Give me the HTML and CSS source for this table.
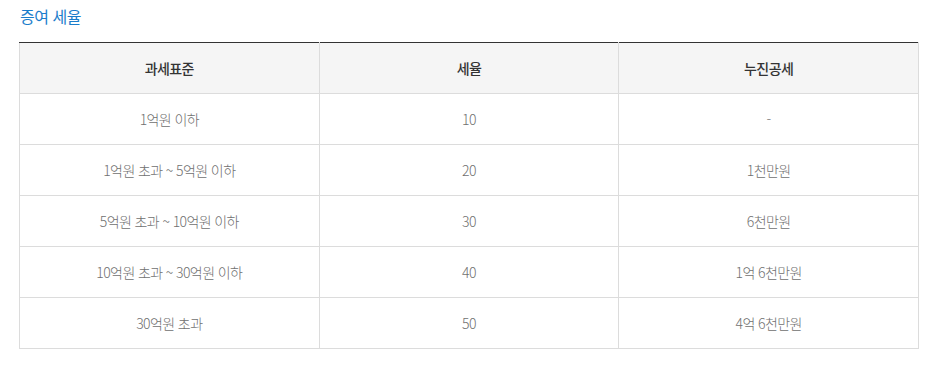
FILE: index.html
```html
<!DOCTYPE html>
<html lang="ko">
<head>
<meta charset="utf-8">
<link rel="stylesheet" href="styles.css">
</head>
<body>
<div class="wrap">
  <h3 class="title">증여 세율</h3>
  <table class="rate">
    <thead>
      <tr><th>과세표준</th><th>세율</th><th>누진공세</th></tr>
    </thead>
    <tbody>
      <tr><td>1억원 이하</td><td>10</td><td>-</td></tr>
      <tr><td>1억원 초과 ~ 5억원 이하</td><td>20</td><td>1천만원</td></tr>
      <tr><td>5억원 초과 ~ 10억원 이하</td><td>30</td><td>6천만원</td></tr>
      <tr><td>10억원 초과 ~ 30억원 이하</td><td>40</td><td>1억 6천만원</td></tr>
      <tr><td>30억원 초과</td><td>50</td><td>4억 6천만원</td></tr>
    </tbody>
  </table>
</div>
</body>
</html>
```
FILE: styles.css
```css
html, body {
  margin: 0;
  padding: 0;
  background: #fff;
}
body {
  font-family: "Noto Sans CJK KR", "Noto Sans", sans-serif;
}
.wrap {
  padding: 5px 0 0 19px;
  width: 900px;
}
.title {
  margin: 0 0 15px 1px;
  font-size: 16px;
  line-height: 22px;
  font-weight: 400;
  color: #1b7dcb;
  letter-spacing: -0.5px;
}
.rate {
  width: 900px;
  border-collapse: collapse;
  table-layout: fixed;
  border-top: 1px solid #333;
}
.rate th, .rate td {
  border: 1px solid #dcdcdc;
  text-align: center;
  height: 50px;
  padding: 0;
  font-size: 14px;
  letter-spacing: -0.6px;
}
.rate thead th {
  border-top: 1px solid #333;
  background: #f5f5f5;
  color: #333;
  font-weight: 500;
}
.rate td {
  color: #707070;
  font-weight: 300;
}
```
